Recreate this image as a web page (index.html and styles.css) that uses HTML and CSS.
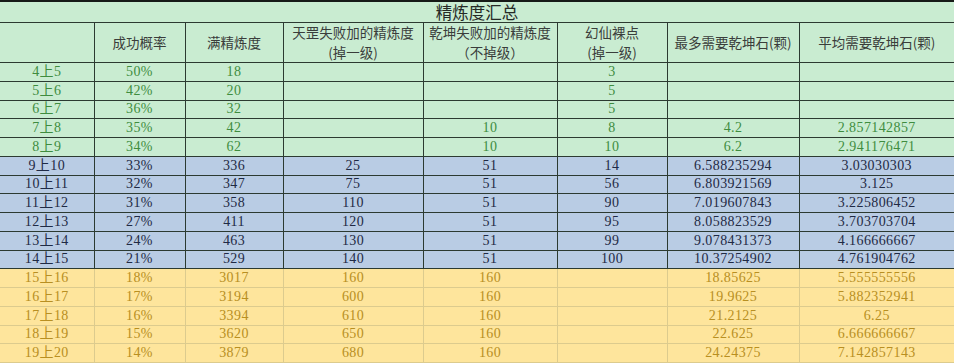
FILE: index.html
```html
<!DOCTYPE html>
<html lang="zh">
<head>
<meta charset="utf-8">
<title>精炼度汇总</title>
<link rel="stylesheet" href="styles.css">
</head>
<body>
<table class="sheet">
  <colgroup>
    <col class="c1"><col class="c2"><col class="c3"><col class="c4">
    <col class="c5"><col class="c6"><col class="c7"><col class="c8">
  </colgroup>
  <thead>
    <tr class="title-row"><th colspan="8" class="title">精炼度汇总</th></tr>
    <tr class="head-row">
      <th></th>
      <th>成功概率</th>
      <th>满精炼度</th>
      <th>天罡失败加的精炼度<br>(掉一级)</th>
      <th>乾坤失败加的精炼度<br>（不掉级）</th>
      <th>幻仙裸点<br>(掉一级)</th>
      <th>最多需要乾坤石(颗)</th>
      <th>平均需要乾坤石(颗)</th>
    </tr>
  </thead>
  <tbody>
    <tr class="g"><td>4上5</td><td>50%</td><td>18</td><td></td><td></td><td>3</td><td></td><td></td></tr>
    <tr class="g"><td>5上6</td><td>42%</td><td>20</td><td></td><td></td><td>5</td><td></td><td></td></tr>
    <tr class="g"><td>6上7</td><td>36%</td><td>32</td><td></td><td></td><td>5</td><td></td><td></td></tr>
    <tr class="g"><td>7上8</td><td>35%</td><td>42</td><td></td><td>10</td><td>8</td><td>4.2</td><td>2.857142857</td></tr>
    <tr class="g"><td>8上9</td><td>34%</td><td>62</td><td></td><td>10</td><td>10</td><td>6.2</td><td>2.941176471</td></tr>
    <tr class="b"><td>9上10</td><td>33%</td><td>336</td><td>25</td><td>51</td><td>14</td><td>6.588235294</td><td>3.03030303</td></tr>
    <tr class="b"><td>10上11</td><td>32%</td><td>347</td><td>75</td><td>51</td><td>56</td><td>6.803921569</td><td>3.125</td></tr>
    <tr class="b"><td>11上12</td><td>31%</td><td>358</td><td>110</td><td>51</td><td>90</td><td>7.019607843</td><td>3.225806452</td></tr>
    <tr class="b"><td>12上13</td><td>27%</td><td>411</td><td>120</td><td>51</td><td>95</td><td>8.058823529</td><td>3.703703704</td></tr>
    <tr class="b"><td>13上14</td><td>24%</td><td>463</td><td>130</td><td>51</td><td>99</td><td>9.078431373</td><td>4.166666667</td></tr>
    <tr class="b"><td>14上15</td><td>21%</td><td>529</td><td>140</td><td>51</td><td>100</td><td>10.37254902</td><td>4.761904762</td></tr>
    <tr class="y"><td>15上16</td><td>18%</td><td>3017</td><td>160</td><td>160</td><td></td><td>18.85625</td><td>5.555555556</td></tr>
    <tr class="y"><td>16上17</td><td>17%</td><td>3194</td><td>600</td><td>160</td><td></td><td>19.9625</td><td>5.882352941</td></tr>
    <tr class="y"><td>17上18</td><td>16%</td><td>3394</td><td>610</td><td>160</td><td></td><td>21.2125</td><td>6.25</td></tr>
    <tr class="y"><td>18上19</td><td>15%</td><td>3620</td><td>650</td><td>160</td><td></td><td>22.625</td><td>6.666666667</td></tr>
    <tr class="y"><td>19上20</td><td>14%</td><td>3879</td><td>680</td><td>160</td><td></td><td>24.24375</td><td>7.142857143</td></tr>
  </tbody>
</table>
</body>
</html>
```

FILE: styles.css
```css
html, body {
  margin: 0;
  padding: 0;
  background: #ffffff;
}

.sheet {
  width: 954px;
  table-layout: fixed;
  border-collapse: collapse;
  border-top: 2px solid #161a17;
  font-family: "Liberation Serif", "Noto Sans CJK SC", serif;
}

.c1 { width: 94px; }
.c2 { width: 91px; }
.c3 { width: 98px; }
.c4 { width: 140px; }
.c5 { width: 134px; }
.c6 { width: 110px; }
.c7 { width: 132px; }
.c8 { width: 155px; }

.sheet th,
.sheet td {
  padding: 0;
  text-align: center;
  vertical-align: middle;
  border: 1px solid #2c3a31;
  white-space: nowrap;
}

.sheet th:first-child,
.sheet td:first-child { border-left: none; }
.sheet th:last-child,
.sheet td:last-child { border-right: none; }

.title-row { height: 21px; }
.title {
  background: #c9ecd1;
  font-family: "Noto Sans CJK SC", sans-serif;
  font-weight: 400;
  font-size: 16.5px;
  color: #252a26;
  line-height: 20px;
  border-bottom-color: #4f5d54;
}

.head-row { height: 39px; }
.head-row th {
  background: #c9ecd1;
  font-family: "Noto Sans CJK SC", sans-serif;
  font-weight: 400;
  font-size: 13.5px;
  line-height: 19.5px;
  color: #3a3d3b;
}

.sheet tbody tr { height: 18.75px; }
.sheet tbody td {
  font-size: 14px;
  line-height: 16px;
  letter-spacing: 0.4px;
}

.g td {
  background: #c9ecd1;
  color: #3f8c3f;
}

.b td {
  background: #b9cce4;
  color: #1f2a45;
}

.y td {
  background: #fee59c;
  color: #b88f22;
  border-color: #dccb8e;
}
.y td:first-child { border-left: none; }
.y td:last-child { border-right: none; }
```
